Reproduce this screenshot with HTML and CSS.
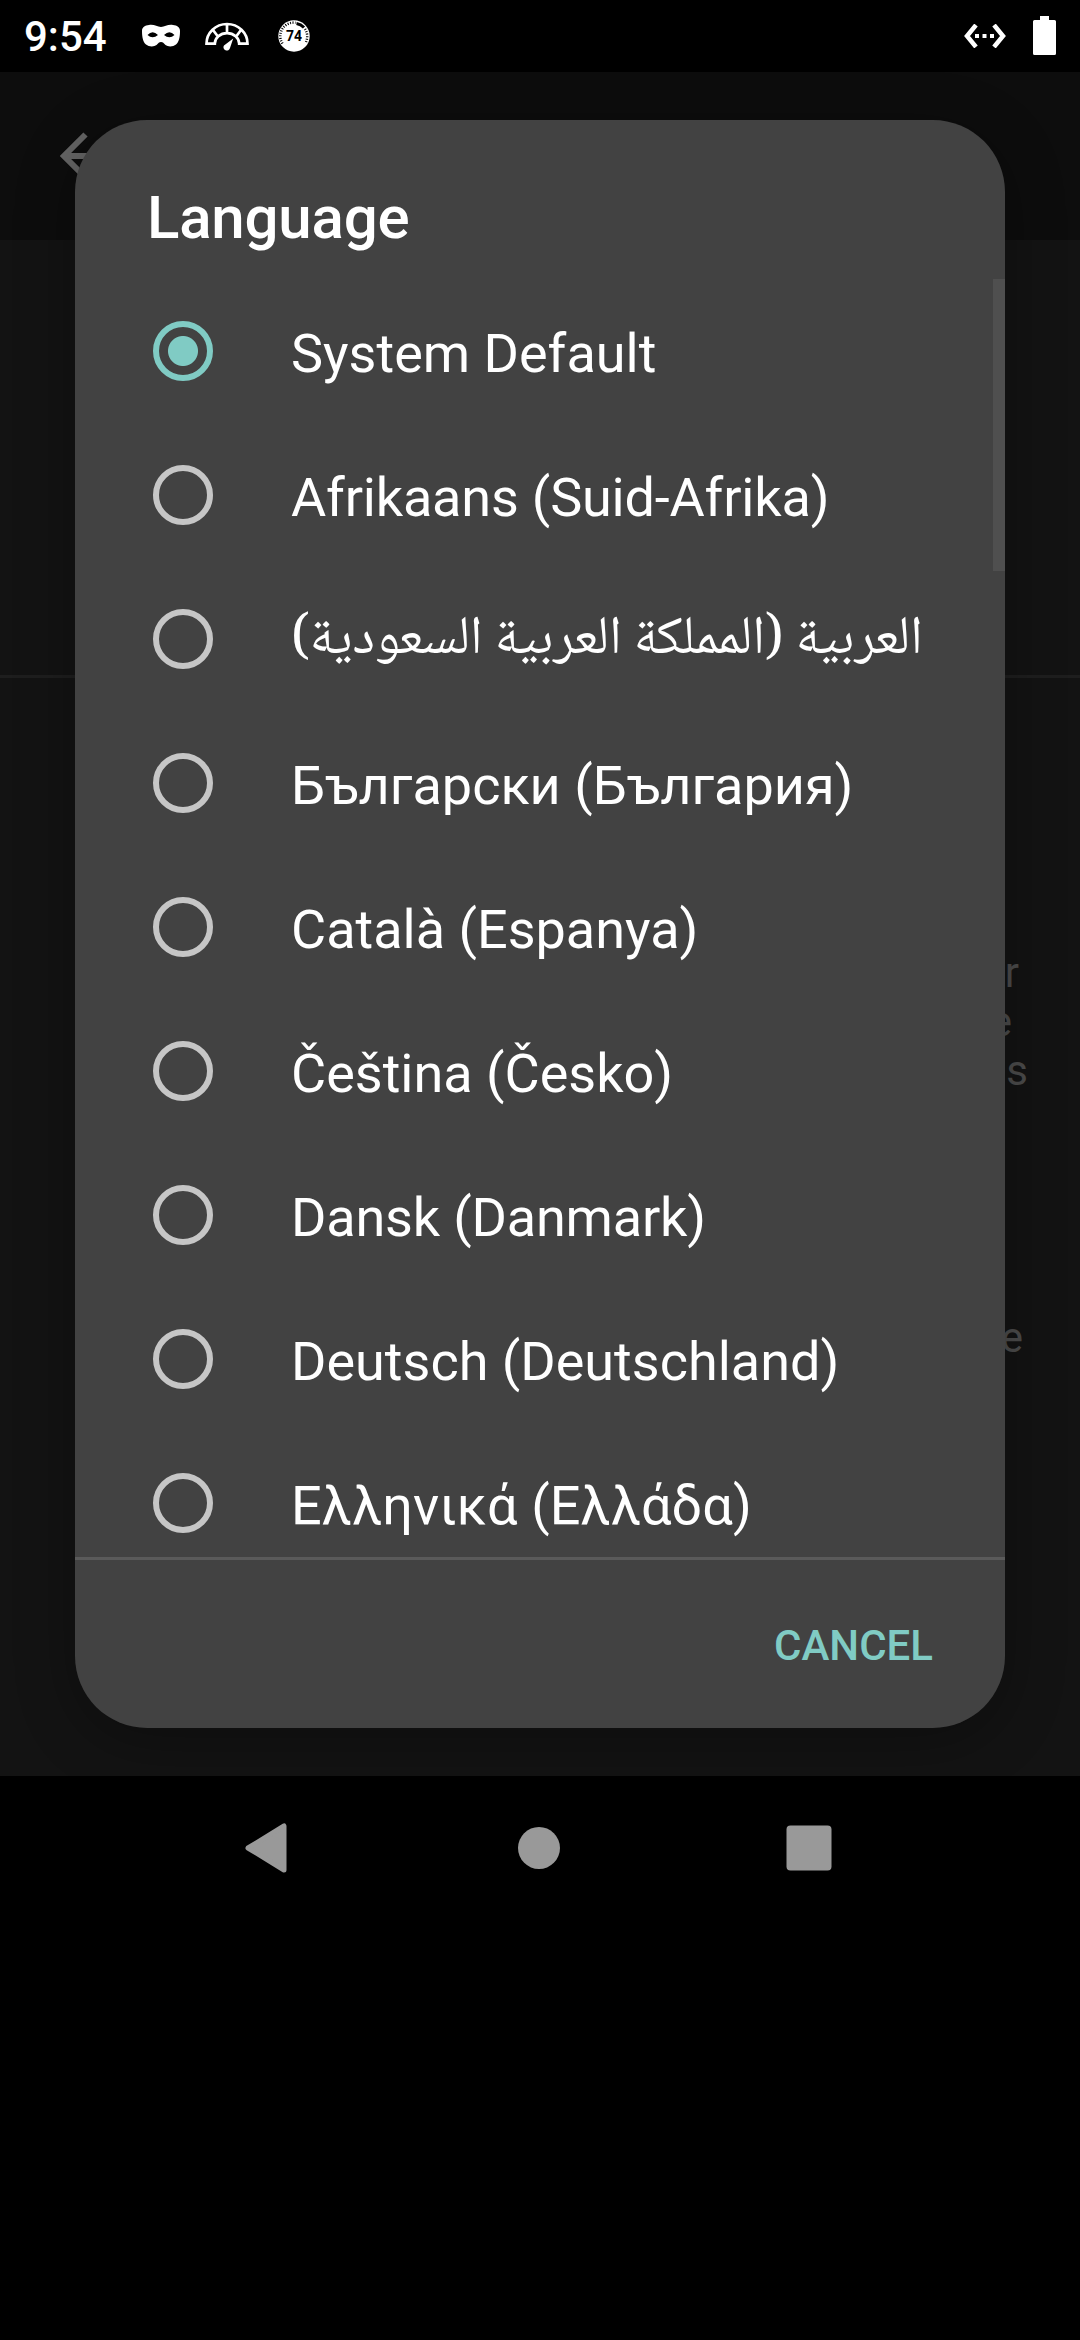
FILE: index.html
```html
<!DOCTYPE html>
<html lang="en">
<head>
<meta charset="utf-8">
<title>Language</title>
<link rel="stylesheet" href="styles.css">
</head>
<body>
<div class="screen">
  <header class="status">
    <span class="clock">9:54</span>
    <svg class="mask" width="40" height="24" viewBox="0 0 40 24" fill="#fff"><path fill-rule="evenodd" d="M8 1C13 0 16 3 20 3S27 0 32 1C36 1.500 39 3 39 7C39 13 38 18 35 20.500C32 23 27 23 24.500 21C22.500 19 22 18 20 18S17.500 19 15.500 21C13 23 8 23 5 20.500C2 18 1 13 1 7C1 3 4 1.500 8 1ZM6.500 11Q11.500 5.500 17 11Q11.500 15.500 6.500 11ZM23 11Q28.500 5.500 33.500 11Q28.500 15.500 23 11Z"/></svg>
    <svg class="gauge" width="46" height="30" viewBox="0 0 46 30" fill="none" stroke="#fff" stroke-width="2.700"><path d="M2.500 22.700A20.500 19.700 0 0 1 43.500 22.700H35.200A12.200 10.500 0 0 0 10.800 22.700ZM23 3V12M9 9L13.500 15M37 9L32.500 15"/><path d="M29.200 17.500L26 27A3.300 3.300 0 1 1 20 24.500Z" fill="#fff" stroke="none"/></svg>
    <svg class="badge" width="32" height="32" viewBox="0 0 32 32"><circle cx="16" cy="16" r="15.700" fill="#fff"/><path d="M4.500 23.500A13.500 13.500 0 0 1 17.500 2.700M27 9A13.500 13.500 0 0 1 27.500 23" fill="none" stroke="#000" stroke-width="2.500" stroke-dasharray="1 1.500"/><path d="M18.500 3.500A13 13 0 0 1 26 7.500" fill="none" stroke="#000" stroke-width="3"/><text x="16" y="21" text-anchor="middle" class="badge-num">74</text></svg>
    <span class="grow"></span>
    <svg class="net" width="42" height="24" viewBox="0 0 42 24"><path d="M12 1L3 12L12 23M30 1L39 12L30 23" fill="none" stroke="#fff" stroke-width="4.500"/><path d="M11 10h4v4h-4zM18.500 10h4v4h-4zM26 10h4v4h-4z" fill="#fff"/></svg>
    <svg class="battery" width="23" height="39" viewBox="0 0 23 39"><path d="M7 0H16V4H21.500Q23 4 23 5.500V37.500Q23 39 21.500 39H1.500Q0 39 0 37.500V5.500Q0 4 1.500 4H7Z" fill="#fff"/></svg>
  </header>
  <main class="app">
    <div class="appbar"><svg width="48" height="48" viewBox="0 0 48 48"><path d="M48 24H4M25.500 2.500L4 24L25.500 45.500" fill="none" stroke="#656565" stroke-width="6"/></svg></div>
    <div class="section"></div>
    <div class="notes">
      <p class="note n1">r</p>
      <p class="note n2">e</p>
      <p class="note n3">s</p>
      <p class="note n4">e</p>
    </div>
    <section class="dialog" role="dialog">
      <h1 class="title">Language</h1>
      <ul class="list">
        <li class="row"><i class="radio on"></i><span>System Default</span></li>
        <li class="row"><i class="radio"></i><span class="tight">Afrikaans (Suid-Afrika)</span></li>
        <li class="row"><i class="radio"></i><span class="arabic" dir="rtl" lang="ar">العربية (المملكة العربية السعودية)</span></li>
        <li class="row"><i class="radio"></i><span>Български (България)</span></li>
        <li class="row"><i class="radio"></i><span>Català (Espanya)</span></li>
        <li class="row"><i class="radio"></i><span>Čeština (Česko)</span></li>
        <li class="row"><i class="radio"></i><span class="tight">Dansk (Danmark)</span></li>
        <li class="row"><i class="radio"></i><span>Deutsch (Deutschland)</span></li>
        <li class="row"><i class="radio"></i><span class="wide">Ελληνικά (Ελλάδα)</span></li>
      </ul>
      <div class="thumb"></div>
      <footer class="actions"><button class="cancel">CANCEL</button></footer>
    </section>
  </main>
  <nav class="nav">
    <svg class="back" width="44" height="50" viewBox="0 0 44 50"><path d="M40 3V47L4 25Z" fill="#999" stroke="#999" stroke-width="5" stroke-linejoin="round"/></svg>
    <svg width="44" height="50" viewBox="0 0 44 50"><circle cx="22" cy="25" r="21" fill="#999"/></svg>
    <svg width="46" height="50" viewBox="0 0 46 50"><rect x=".5" y="2.500" width="45" height="45" rx="4" fill="#999"/></svg>
  </nav>
</div>
</body>
</html>
```
FILE: styles.css
```css
* { box-sizing: border-box; }
body { margin: 0; background: #000; color: #fff; font-family: Roboto, "Noto Sans", sans-serif; }
.screen { width: 1080px; height: 2340px; display: flex; flex-direction: column; overflow: hidden; }
svg { display: block; flex: none; }

.status { height: 72px; display: flex; align-items: center; padding: 0 24px; }
.clock { width: 117px; font-size: 42px; font-weight: 500; line-height: 72px; padding-top: 2px; }
.gauge { margin-left: 23px; }
.badge { margin-left: 28px; }
.badge-num { font: 700 14px Roboto, sans-serif; }
.grow { flex: 1; }
.battery { margin: -2px 0 0 27px; }

.app { position: relative; height: 1704px; background: #131313; overflow: hidden; }
.appbar { height: 168px; background: #0d0d0d; padding: 60px; }
.section { height: 438px; border-bottom: 3px solid #1e1e1e; }
.notes { padding-top: 270px; color: #4b4b4b; font-size: 42px; line-height: 49px; }
.note { margin: 0; text-align: right; }
.n1 { padding-right: 61px; }
.n2 { padding-right: 68px; }
.n3 { padding-right: 52px; }
.n4 { padding-right: 57px; margin-top: 218px; }

.dialog {
  position: absolute; left: 75px; top: 48px; width: 930px; height: 1608px;
  border-radius: 72px; background: #424242; overflow: hidden;
  display: flex; flex-direction: column;
  box-shadow: 0 12px 60px rgba(0, 0, 0, .3);
}
.title { margin: 0; height: 159px; padding: 62px 72px 0; font-size: 60px; font-weight: 500; line-height: 72px; letter-spacing: -.2px; }
.list { list-style: none; margin: 0; padding: 0; height: 1278px; overflow: hidden; }
.row { height: 144px; display: flex; align-items: center; padding-left: 78px; font-size: 54px; line-height: 64px; white-space: nowrap; }
.row span { margin-left: 78px; padding-top: 6px; }
.row .arabic { padding-top: 4px; font-family: "Noto Naskh Arabic", "Noto Sans Arabic", "DejaVu Sans", sans-serif; }
.tight { letter-spacing: -.18px; }
.wide { letter-spacing: .1px; }
.radio { width: 60px; height: 60px; border: 6px solid #c6c6c6; border-radius: 50%; flex: none; }
.on { border-color: #80cbc4; background: radial-gradient(circle, #80cbc4 14.500px, transparent 15.500px); }
.thumb { position: absolute; right: 0; top: 159px; width: 12px; height: 292px; background: #4f4f4f; }
.actions { flex: 1; border-top: 3px solid #5a5a5a; display: flex; justify-content: flex-end; align-items: center; padding-right: 72px; }
.cancel { border: 0; padding: 3px 0 0; background: none; color: #80cbc4; font: 500 42px/50px Roboto, sans-serif; }

.nav { height: 144px; display: flex; justify-content: space-around; align-items: center; padding: 0 135px; }
.back { margin: 0 4px 0 -4px; }
```
